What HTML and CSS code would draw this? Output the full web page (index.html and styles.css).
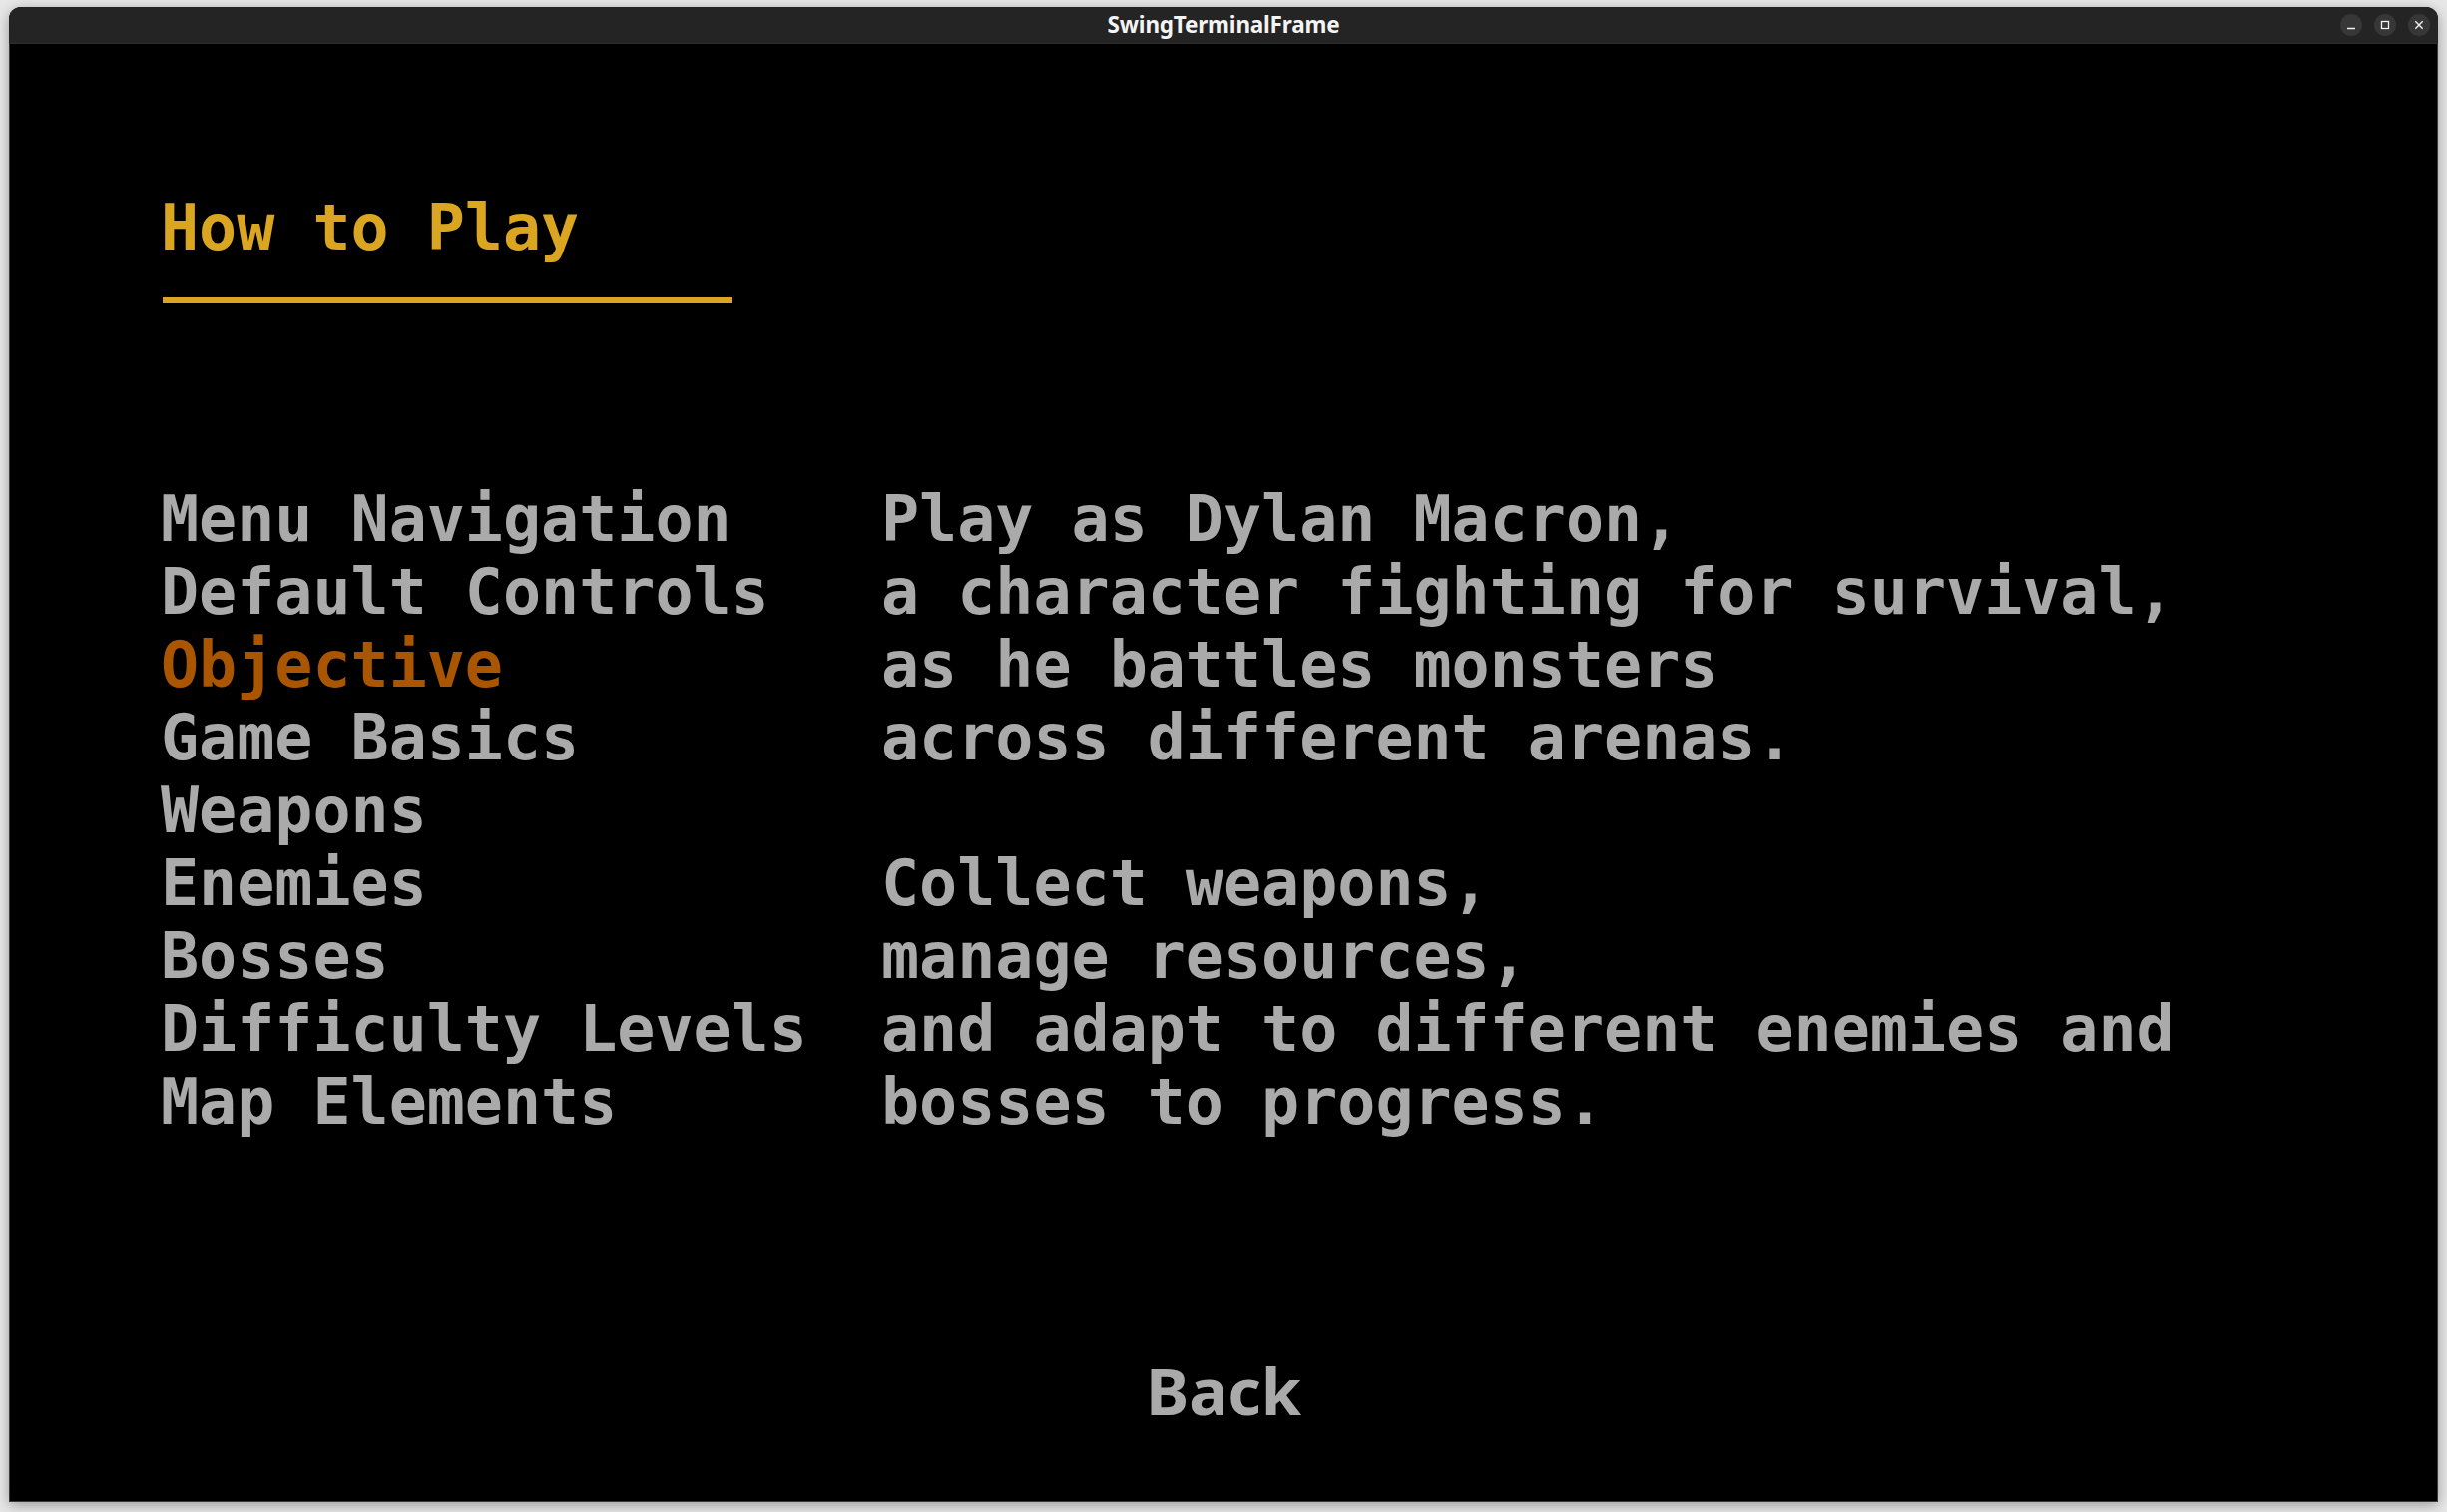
FILE: index.html
```html
<!DOCTYPE html>
<html>
<head>
<meta charset="utf-8">
<title>SwingTerminalFrame</title>
<link rel="stylesheet" href="styles.css">
</head>
<body>
<div class="window">
  <div class="titlebar">
    <div class="tb-side"></div>
    <div class="tb-title">SwingTerminalFrame</div>
    <div class="tb-side tb-controls">
      <span class="ctl"><svg width="22" height="22" viewBox="0 0 22 22"><line x1="7" y1="14.5" x2="15" y2="14.5" stroke="#f2f2f2" stroke-width="1.3"/></svg></span>
      <span class="ctl"><svg width="22" height="22" viewBox="0 0 22 22"><rect x="7.5" y="7.5" width="7" height="7" fill="none" stroke="#f2f2f2" stroke-width="1.3"/></svg></span>
      <span class="ctl"><svg width="22" height="22" viewBox="0 0 22 22"><path d="M7.3 7.3 L14.7 14.7 M14.7 7.3 L7.3 14.7" stroke="#f2f2f2" stroke-width="1.4"/></svg></span>
    </div>
  </div>
  <div class="screen">
    <div class="heading">How to Play</div>
    <div class="rule"></div>
    <div class="columns">
      <div class="menu">
        <div class="line">Menu Navigation</div>
        <div class="line">Default Controls</div>
        <div class="line selected">Objective</div>
        <div class="line">Game Basics</div>
        <div class="line">Weapons</div>
        <div class="line">Enemies</div>
        <div class="line">Bosses</div>
        <div class="line">Difficulty Levels</div>
        <div class="line">Map Elements</div>
      </div>
      <div class="desc">
        <div class="line">Play as Dylan Macron,</div>
        <div class="line">a character fighting for survival,</div>
        <div class="line">as he battles monsters</div>
        <div class="line">across different arenas.</div>
        <div class="line"></div>
        <div class="line">Collect weapons,</div>
        <div class="line">manage resources,</div>
        <div class="line">and adapt to different enemies and</div>
        <div class="line">bosses to progress.</div>
      </div>
    </div>
    <div class="back">Back</div>
  </div>
</div>
</body>
</html>
```

FILE: styles.css
```css
html, body {
  margin: 0;
  padding: 0;
}
body {
  background: #e8e8e8;
  width: 2452px;
  height: 1515px;
  overflow: hidden;
}
.window {
  margin: 7px 0 0 9px;
  width: 2434px;
  height: 1498px;
  display: flex;
  flex-direction: column;
  border-radius: 12px 12px 0 0;
  overflow: hidden;
  box-shadow: 0 3px 14px rgba(0, 0, 0, 0.35);
  background: #000;
}
.titlebar {
  height: 36px;
  flex: 0 0 36px;
  background: #242424;
  border-bottom: 1px solid #2e2e2e;
  display: grid;
  grid-template-columns: 1fr auto 1fr;
  align-items: center;
}
.tb-title {
  font-family: "Noto Sans", "DejaVu Sans", sans-serif;
  font-weight: 700;
  font-size: 22.5px;
  color: #f4f4f4;
  letter-spacing: -0.2px;
  line-height: 36px;
}
.tb-controls {
  display: flex;
  justify-content: flex-end;
  align-items: center;
  gap: 12px;
  padding-right: 8px;
}
.ctl {
  width: 22px;
  height: 22px;
  border-radius: 50%;
  background: #373737;
  display: block;
}
.ctl svg {
  display: block;
}
.screen {
  flex: 1;
  background: #000;
  border: 1px solid #3a3a3a;
  border-top: none;
  padding: 148px 0 0 151px;
  display: flex;
  flex-direction: column;
  font-family: "DejaVu Sans Mono", "Liberation Mono", monospace;
  font-weight: 700;
  font-size: 63.3px;
  line-height: 73px;
  color: #aaaaaa;
}
.heading {
  color: #daa520;
  height: 73px;
  white-space: pre;
}
.rule {
  margin-top: 33px;
  margin-left: 2px;
  width: 570px;
  height: 6px;
  background: #daa520;
}
.columns {
  margin-top: 180px;
  display: flex;
}
.menu {
  width: 722px;
  flex: 0 0 722px;
}
.line {
  height: 73px;
  white-space: pre;
}
.selected {
  color: #aa5500;
}
.back {
  margin-top: 216px;
  margin-left: -151px;
  align-self: stretch;
  text-align: center;
  white-space: pre;
  font-family: "Noto Sans", "Open Sans", sans-serif;
  font-weight: 700;
  font-size: 65px;
  line-height: 73px;
}
```
